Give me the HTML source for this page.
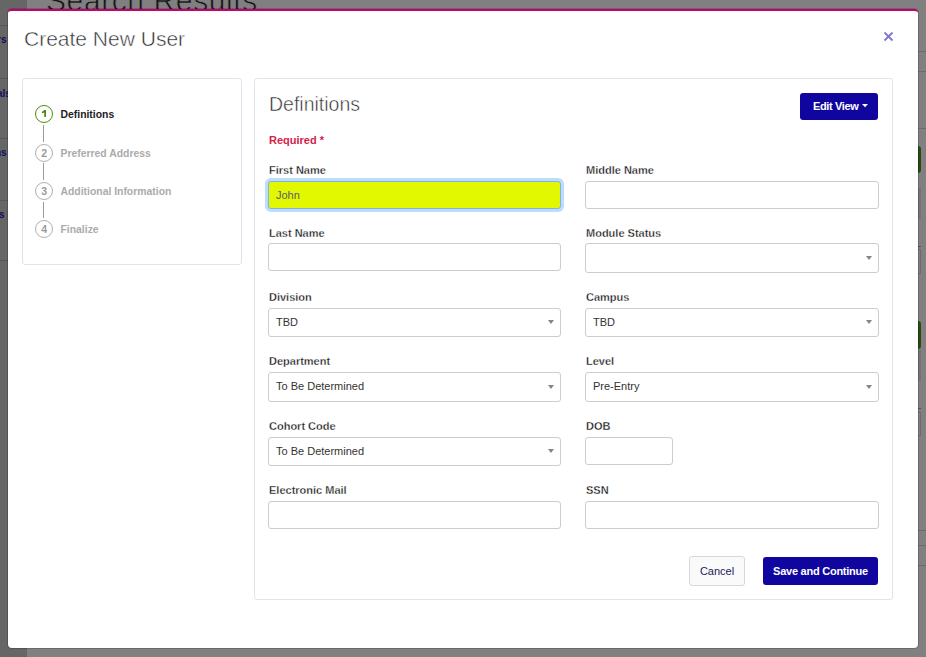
<!DOCTYPE html>
<html><head><meta charset="utf-8">
<style>
*{box-sizing:border-box;margin:0;padding:0}
html,body{width:926px;height:657px;overflow:hidden;font-family:"Liberation Sans",sans-serif;}
body{background:#808080;position:relative}
.abs{position:absolute}
#side{left:0;top:0;width:27px;height:657px;background:#666}
.sidetxt{position:absolute;font-size:10px;color:#120e58;font-weight:bold;white-space:nowrap}
.sline{position:absolute;left:0;width:27px;height:1px;background:#585858}
.rline{position:absolute;left:918px;width:8px;height:1px;background:#6c6c6c}
#bgtitle{left:46px;top:-16px;font-size:30px;color:#141414;-webkit-text-stroke:0.7px #808080;white-space:nowrap;letter-spacing:0.6px}
#modal{left:8px;top:9px;width:910px;height:639px;background:#fff;border-top:2px solid #c8006e;border-radius:4px;box-shadow:0 0 0 1px rgba(0,0,0,0.18)}
#title{left:24px;top:27px;font-size:21px;color:#2a2a2a;-webkit-text-stroke:0.5px #fff;white-space:nowrap}
#lpanel{left:22px;top:78px;width:220px;height:187px;border:1px solid #e0e4ea;border-radius:3px;background:#fff}
.step{position:absolute;left:35px;width:18px;height:18px;border-radius:50%;border:1.4px solid #b0b0b0;font-size:10.5px;font-weight:bold;color:#999;text-align:center;line-height:17px;text-indent:0.5px}
.slabel{position:absolute;left:60.5px;font-size:10.4px;font-weight:bold;color:#ababab;white-space:nowrap}
.vline{position:absolute;left:43px;width:1px;background:#9a9a9a}
#rpanel{left:254px;top:78px;width:639px;height:522px;border:1px solid #e0e4ea;border-radius:3px;background:#fff}
#deftitle{left:269px;top:93px;font-size:19.5px;color:#2a2a2a;-webkit-text-stroke:0.5px #fff;white-space:nowrap}
#editview{left:800px;top:93px;width:78px;height:27px;background:#10069f;border-radius:3px;color:#fff;font-size:11px;font-weight:bold;line-height:27px;padding-left:13px;white-space:nowrap;letter-spacing:-0.35px}
#editview svg{position:absolute;left:62px;top:11px}
#req{left:269px;top:134px;font-size:11px;font-weight:bold;color:#d6204a}
.lbl{position:absolute;font-size:11px;font-weight:bold;color:#111;-webkit-text-stroke:0.3px #fff;white-space:nowrap}
.inp{position:absolute;height:28px;border:1px solid #cdcdcd;border-radius:3px;background:#fff;font-size:11px;color:#333;padding-left:7px;line-height:26px;white-space:nowrap}
.sel{height:29px;line-height:27px}
.caret{position:absolute;right:6px;top:11px;width:0;height:0;border-left:3px solid transparent;border-right:3px solid transparent;border-top:4px solid #858585}
#first{left:268px;top:181px;width:293px;height:28px;background:#e2f800;border:1px solid #7db2ee;box-shadow:0 0 0 3px #bedcfb;color:#5a5a78}
#cancel{left:689px;top:556px;width:56px;height:30px;border:1px solid #d8d8d8;border-radius:3px;background:#fafafa;color:#1c1a5a;font-size:11px;text-align:center;line-height:28px}
#save{left:763px;top:557px;width:115px;height:28px;background:#10069f;border-radius:3px;color:#fff;font-size:11px;font-weight:bold;text-align:center;line-height:28px;white-space:nowrap;letter-spacing:-0.25px}
</style></head><body>
<div id="side" class="abs">
  <div class="sline" style="top:25px"></div>
  <div class="sidetxt" style="left:-3px;top:34px">rs</div>
  <div class="sline" style="top:78px"></div>
  <div class="sidetxt" style="left:-3px;top:88px">als</div>
  <div class="sline" style="top:138px"></div>
  <div class="sidetxt" style="left:-5px;top:147px">ns</div>
  <div class="sline" style="top:200px"></div>
  <div class="sidetxt" style="left:-1px;top:209px">s</div>
  <div class="sline" style="top:260px"></div>
</div>
<div class="rline" style="top:51px"></div>
<div class="rline" style="top:71px"></div>
<div class="rline" style="top:128px"></div>
<div class="abs" style="left:918px;top:146px;width:3px;height:27px;background:#2c4a10;border-radius:0 3px 3px 0"></div>
<div class="abs" style="left:918px;top:188px;width:3px;height:31px;background:#747474"></div>
<div class="abs" style="left:918px;top:246px;width:3px;height:1px;background:#555"></div>
<div class="abs" style="left:918px;top:249px;width:3px;height:25px;border:1px solid #6c6c6c;border-left:none"></div>
<div class="abs" style="left:918px;top:321px;width:3px;height:28px;background:#2c4a10;border-radius:0 3px 3px 0"></div>
<div class="abs" style="left:918px;top:350px;width:3px;height:31px;background:#747474"></div>
<div class="abs" style="left:918px;top:408px;width:3px;height:1px;background:#555"></div>
<div class="abs" style="left:918px;top:412px;width:3px;height:24px;border:1px solid #6c6c6c;border-left:none"></div>
<div class="rline" style="top:530px"></div>
<div class="rline" style="top:545px"></div>
<div class="rline" style="top:565px"></div>
<div id="bgtitle" class="abs">Search Results</div>

<div id="modal" class="abs"></div>
<div id="title" class="abs">Create New User</div>
<svg class="abs" style="left:883px;top:31px" width="11" height="11" viewBox="0 0 11 11"><path d="M1.5 1.5 L9.5 9.5 M9.5 1.5 L1.5 9.5" stroke="#7d78cf" stroke-width="1.8" fill="none"/></svg>

<div id="lpanel" class="abs"></div>
<div class="step" style="top:105px;border-color:#4c8c12;color:#4a8a10"><svg style="position:absolute;left:-1.4px;top:-1.4px" width="18" height="18" viewBox="0 0 18 18"><path d="M9.3 4.9H11V12H9.3V7.4Q8.2 8.1 6.9 8.3V6.7Q8.6 6.1 9.3 4.9Z" fill="#4a8a10"/></svg></div>
<div class="slabel" style="top:109px;color:#222">Definitions</div>
<div class="vline" style="top:125px;height:17px"></div>
<div class="step" style="top:143.5px">2</div>
<div class="slabel" style="top:148px">Preferred Address</div>
<div class="vline" style="top:163px;height:17px"></div>
<div class="step" style="top:182px">3</div>
<div class="slabel" style="top:186px">Additional Information</div>
<div class="vline" style="top:202px;height:16px"></div>
<div class="step" style="top:220px">4</div>
<div class="slabel" style="top:224px">Finalize</div>

<div id="rpanel" class="abs"></div>
<div id="deftitle" class="abs">Definitions</div>
<div id="editview" class="abs">Edit View<svg width="6" height="4" viewBox="0 0 6 4"><path d="M0 0H6L3 3.3Z" fill="#fff"/></svg></div>
<div id="req" class="abs">Required *</div>

<div class="lbl" style="left:269px;top:164px">First Name</div>
<div class="inp" id="first">John</div>
<div class="lbl" style="left:586px;top:164px">Middle Name</div>
<div class="inp" style="left:585px;top:181px;width:294px"></div>

<div class="lbl" style="left:269px;top:227px">Last Name</div>
<div class="inp" style="left:268px;top:243px;width:293px"></div>
<div class="lbl" style="left:586px;top:227px">Module Status</div>
<div class="inp sel" style="left:585px;top:243px;width:294px;height:30px"><span class="caret" style="top:12px"></span></div>

<div class="lbl" style="left:269px;top:291px">Division</div>
<div class="inp sel" style="left:268px;top:308px;width:293px">TBD<span class="caret"></span></div>
<div class="lbl" style="left:586px;top:291px">Campus</div>
<div class="inp sel" style="left:585px;top:308px;width:294px">TBD<span class="caret"></span></div>

<div class="lbl" style="left:269px;top:355px">Department</div>
<div class="inp sel" style="left:268px;top:372px;width:293px;height:30px">To Be Determined<span class="caret" style="top:12px"></span></div>
<div class="lbl" style="left:586px;top:355px">Level</div>
<div class="inp sel" style="left:585px;top:372px;width:294px;height:30px">Pre-Entry<span class="caret" style="top:12px"></span></div>

<div class="lbl" style="left:269px;top:420px">Cohort Code</div>
<div class="inp sel" style="left:268px;top:437px;width:293px">To Be Determined<span class="caret"></span></div>
<div class="lbl" style="left:586px;top:420px">DOB</div>
<div class="inp" style="left:585px;top:437px;width:88px"></div>

<div class="lbl" style="left:269px;top:484px">Electronic Mail</div>
<div class="inp" style="left:268px;top:501px;width:293px"></div>
<div class="lbl" style="left:586px;top:484px">SSN</div>
<div class="inp" style="left:585px;top:501px;width:294px"></div>

<div id="cancel" class="abs">Cancel</div>
<div id="save" class="abs">Save and Continue</div>
</body></html>
